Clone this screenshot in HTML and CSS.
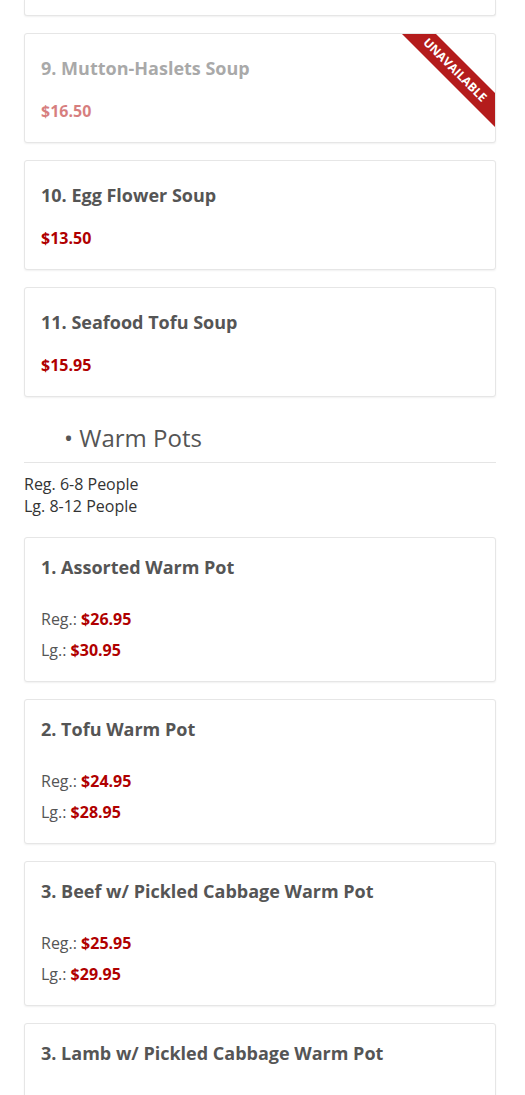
FILE: index.html
```html
<!DOCTYPE html>
<html lang="en">
<head>
    <meta charset="UTF-8">
    <meta name="viewport" content="width=device-width, initial-scale=1.0">
    <title>Menu</title>
    <link rel="stylesheet" href="styles.css">
</head>
<body>
    <div class="menu">
        <!-- bottom of the previous soup card, scrolled away -->
        <div class="card card-end"></div>

        <div class="card card-single card-off">
            <h3 class="card-title">9. Mutton-Haslets Soup</h3>
            <div class="card-price">$16.50</div>
            <div class="ribbon">Unavailable</div>
        </div>

        <div class="card card-single">
            <h3 class="card-title">10. Egg Flower Soup</h3>
            <div class="card-price">$13.50</div>
        </div>

        <div class="card card-single">
            <h3 class="card-title">11. Seafood Tofu Soup</h3>
            <div class="card-price">$15.95</div>
        </div>

        <h2 class="section-title">&bull; Warm Pots</h2>
        <p class="section-note">Reg. 6-8 People<br>Lg. 8-12 People</p>

        <div class="card">
            <h3 class="card-title">1. Assorted Warm Pot</h3>
            <div class="price-list">
                <div class="price-row">Reg.: <span class="price">$26.95</span></div>
                <div class="price-row">Lg.: <span class="price">$30.95</span></div>
            </div>
        </div>

        <div class="card">
            <h3 class="card-title">2. Tofu Warm Pot</h3>
            <div class="price-list">
                <div class="price-row">Reg.: <span class="price">$24.95</span></div>
                <div class="price-row">Lg.: <span class="price">$28.95</span></div>
            </div>
        </div>

        <div class="card">
            <h3 class="card-title">3. Beef w/ Pickled Cabbage Warm Pot</h3>
            <div class="price-list">
                <div class="price-row">Reg.: <span class="price">$25.95</span></div>
                <div class="price-row">Lg.: <span class="price">$29.95</span></div>
            </div>
        </div>

        <div class="card">
            <h3 class="card-title">3. Lamb w/ Pickled Cabbage Warm Pot</h3>
            <div class="price-list">
                <div class="price-row">Reg.: <span class="price">$25.95</span></div>
                <div class="price-row">Lg.: <span class="price">$29.95</span></div>
            </div>
        </div>
    </div>
</body>
</html>
```

FILE: styles.css
```css
body {
    margin: 0;
    font-family: "Open Sans", Arial, sans-serif;
    color: #333;
    background: #fff;
}
.menu {
    padding: 0 29px 0 24px;
}
.card {
    position: relative;
    overflow: hidden;
    background: #fff;
    border: 1px solid #e6e6e6;
    border-radius: 3px;
    box-shadow: 0 1px 2px rgba(0,0,0,0.06);
    padding: 15px 16px 20px;
    margin-bottom: 17px;
}
.card-end {
    height: 15px;
    padding: 0;
    border-top: 0;
    border-radius: 0 0 3px 3px;
}
.card-title {
    margin: 0;
    font-size: 18px;
    line-height: 28px;
    font-weight: 700;
    color: #555;
}
.card-single .card-title {
    margin-top: 5px;
}
.card-price {
    margin-top: 18px;
    font-size: 16px;
    line-height: 22px;
    font-weight: 700;
    color: #b00000;
}
.price-list {
    margin-top: 27px;
}
.price-row {
    font-size: 16px;
    line-height: 22px;
    color: #555;
}
.price-row + .price-row {
    margin-top: 9px;
}
.price {
    font-weight: 700;
    color: #b00000;
}
.card-off .card-title,
.card-off .card-price {
    opacity: 0.5;
}
.ribbon {
    position: absolute;
    top: 24px;
    right: -35px;
    width: 150px;
    height: 24px;
    line-height: 24px;
    background: #b41c1c;
    color: #fff;
    font-size: 12px;
    font-weight: 700;
    text-transform: uppercase;
    text-align: center;
    transform: rotate(45deg);
}
.section-title {
    margin: 24px 0 0;
    padding: 0 0 8px 40px;
    border-bottom: 1px solid #e5e5e5;
    font-size: 24px;
    line-height: 33px;
    font-weight: 400;
    color: #555;
}
.section-note {
    margin: 10px 0 20px;
    font-size: 16px;
    line-height: 22px;
    color: #333;
}
```
